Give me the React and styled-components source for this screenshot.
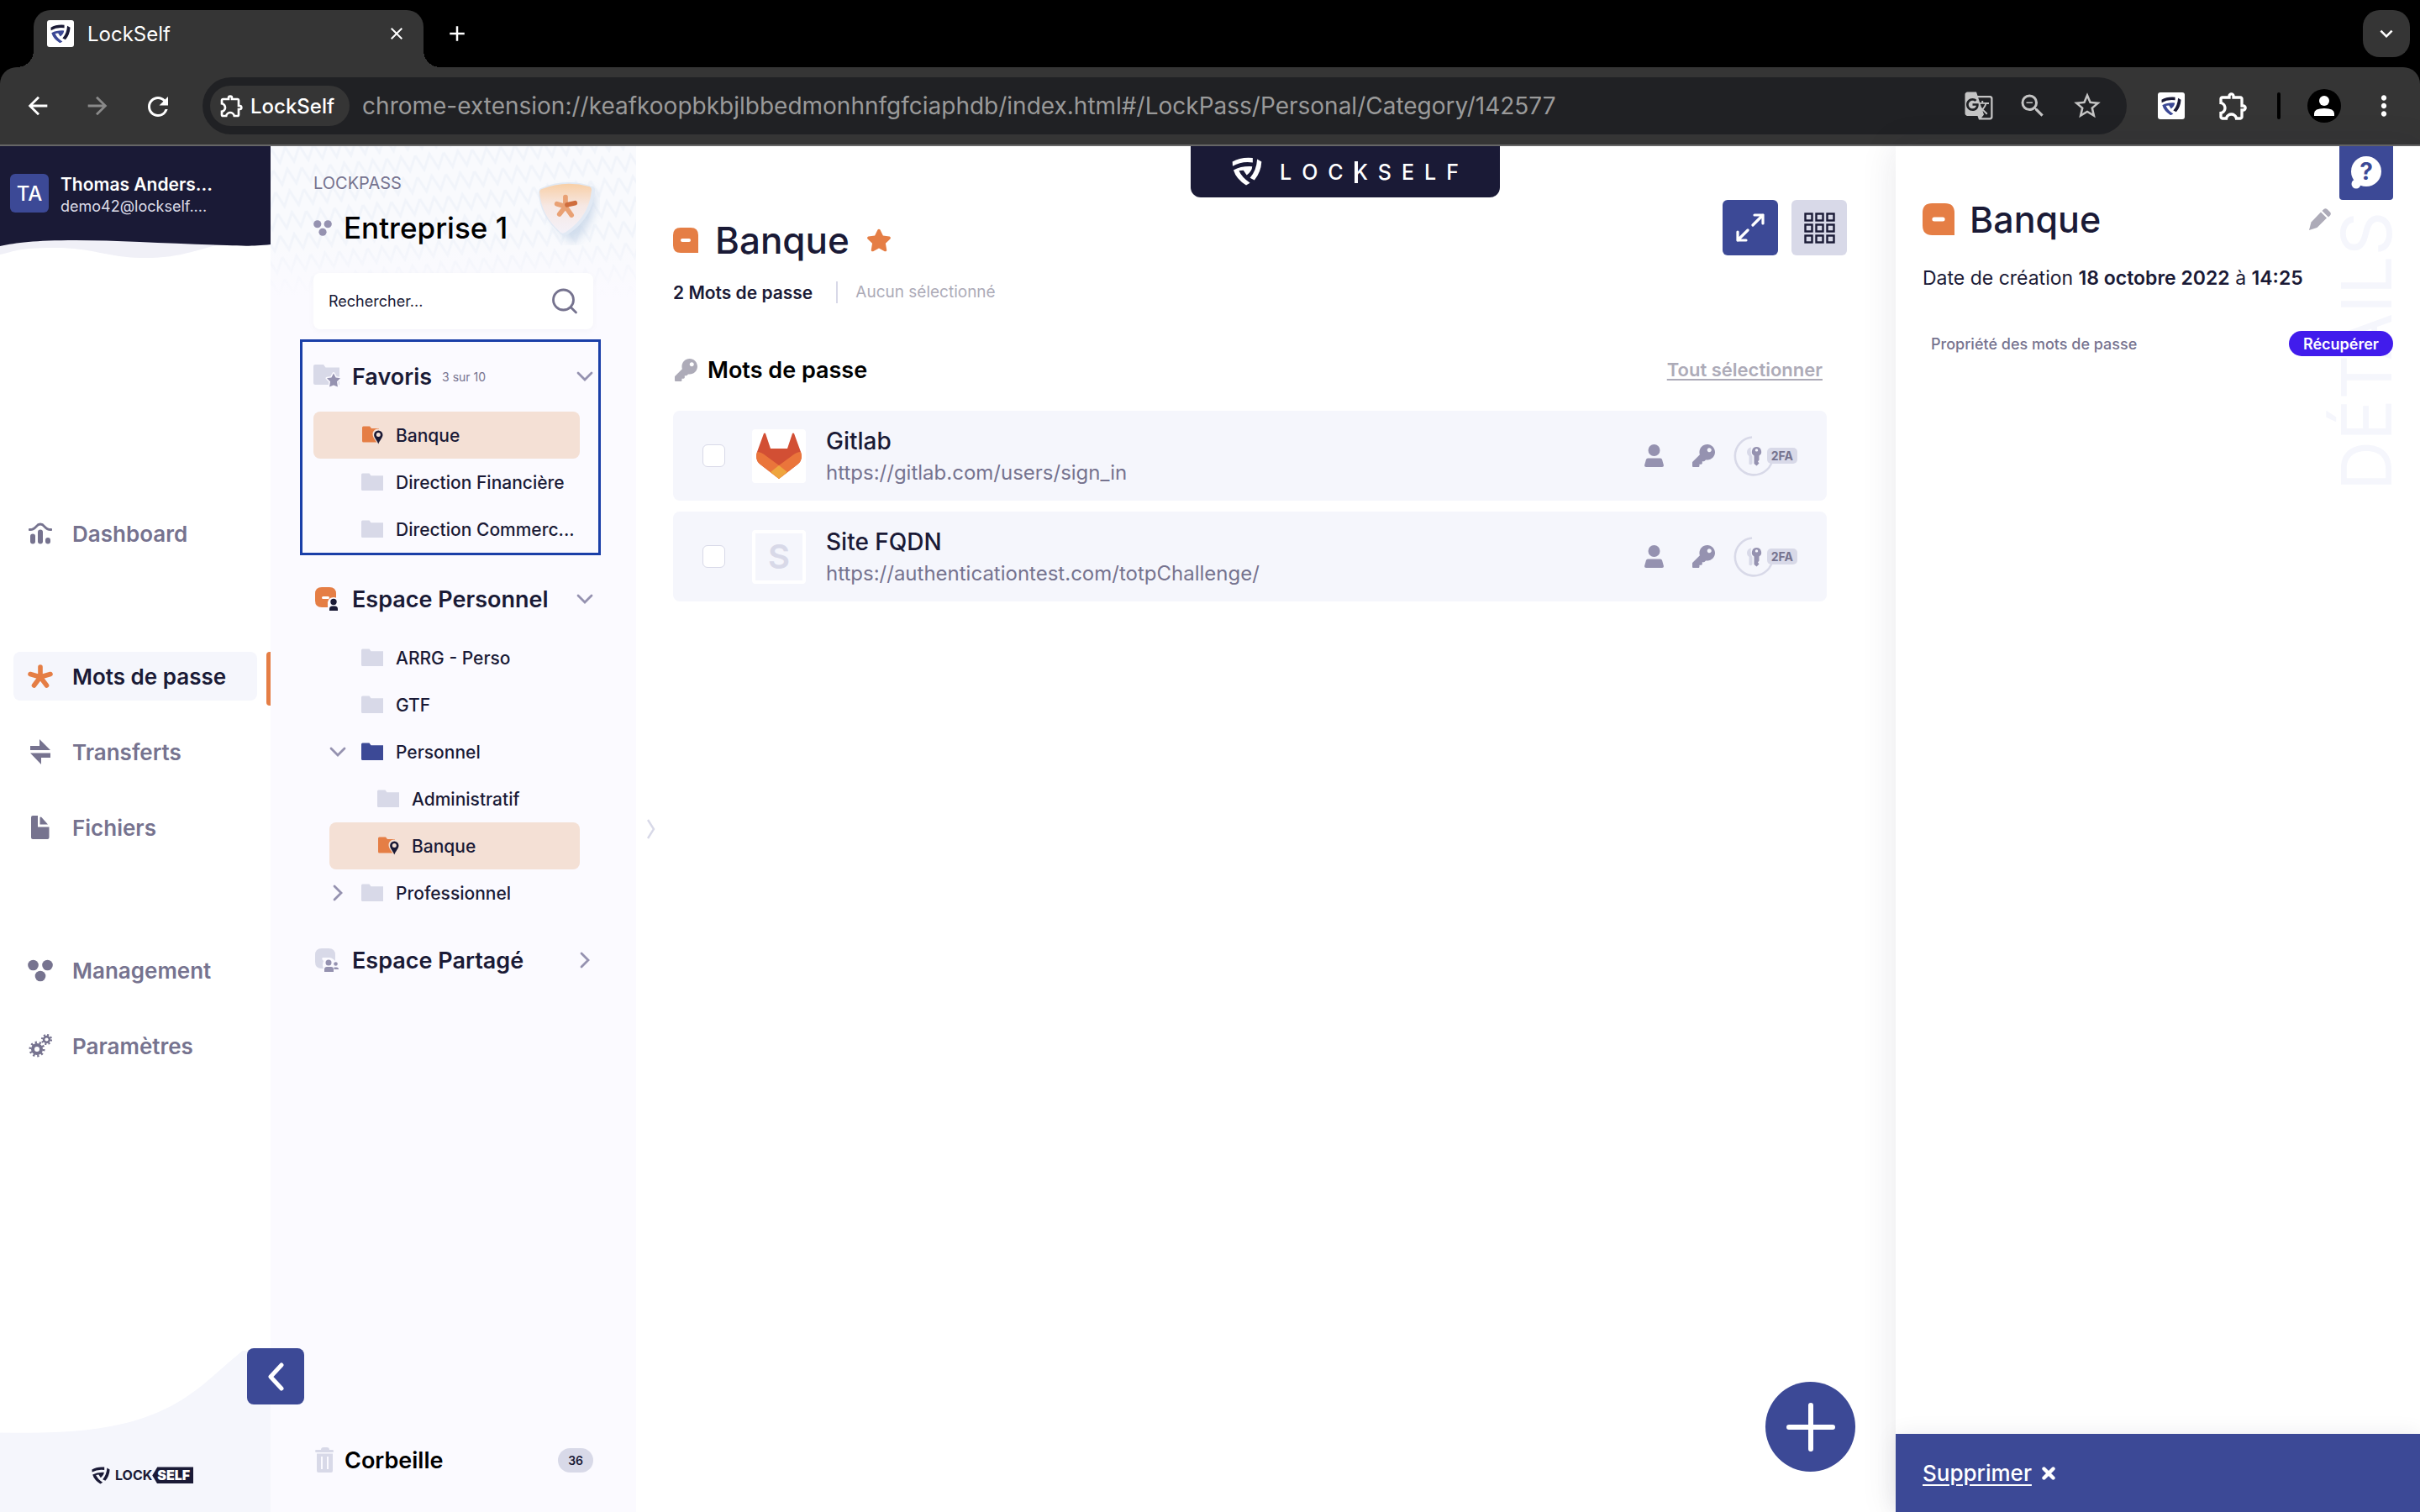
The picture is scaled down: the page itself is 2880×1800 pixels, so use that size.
import { useState } from "react"
import styled, { createGlobalStyle, css } from "styled-components"
import {
    MdArrowBack,
    MdArrowForward,
    MdRefresh,
    MdOutlineExtension,
    MdGTranslate,
    MdZoomOut,
    MdStarOutline,
    MdClose,
    MdAdd,
    MdMoreVert,
    MdKeyboardArrowDown,
} from "react-icons/md"
import { FaKey, FaStar } from "react-icons/fa"

const GlobalStyle = createGlobalStyle`
    * { box-sizing: border-box; }

    body {
        margin: 0;
        background: #fff;
        color: #1a1a36;
        font-family: Inter, "Liberation Sans", sans-serif;
    }

    button, input {
        font-family: inherit;
    }

    button {
        border: 0;
        padding: 0;
        background: none;
        color: inherit;
        cursor: pointer;
    }

    svg {
        display: block;
        flex: none;
    }

    h1, h2, h3, p, ul {
        margin: 0;
        padding: 0;
    }

    ul { list-style: none; }
`

const Page = styled.div`
    min-height: 100vh;
    display: flex;
    flex-direction: column;
`

/* ---------- browser ---------- */

const TabStrip = styled.div`
    height: 80px;
    padding: 12px 12px 0 40px;
    display: flex;
    align-items: flex-start;
    background: #000;
    color: #fff;
`

const Tab = styled.div`
    position: relative;
    width: 464px;
    height: 68px;
    padding: 0 20px 12px 16px;
    display: flex;
    align-items: center;
    gap: 16px;
    border-radius: 20px 20px 0 0;
    background: #353535;
    font-size: 24px;

    &::before, &::after {
        content: "";
        position: absolute;
        bottom: 0;
        width: 20px;
        height: 20px;
    }

    &::before {
        right: 100%;
        background: radial-gradient(circle at 0 0, #000 20px, #353535 20px);
    }

    &::after {
        left: 100%;
        background: radial-gradient(circle at 100% 0, #000 20px, #353535 20px);
    }
`

const TabTitle = styled.span`
    flex: 1;
`

const Favicon = styled.span`
    width: 32px;
    height: 32px;
    display: flex;
    align-items: center;
    justify-content: center;
    border-radius: 3px;
    background: #fff;
`

const NewTab = styled.button`
    width: 80px;
    height: 56px;
    display: flex;
    align-items: center;
    justify-content: center;
`

const TabSearch = styled.button`
    width: 56px;
    height: 56px;
    margin-left: auto;
    display: flex;
    align-items: center;
    justify-content: center;
    border-radius: 20px;
    background: #353535;
`

const ToolbarBack = styled.div`
    background: #000;
`

const Toolbar = styled.div`
    height: 94px;
    padding: 0 24px 0 28px;
    display: flex;
    align-items: center;
    border-bottom: 2px solid #666;
    border-radius: 20px 20px 0 0;
    background: #353535;
    color: #fff;
`

const NavButton = styled.button`
    width: 34px;
    height: 34px;
    margin-right: 37px;
    color: ${props => props.disabled ? "#8a8a8a" : "#fff"};
`

const Omnibox = styled.div`
    flex: 1;
    min-width: 0;
    height: 68px;
    padding: 0 28px 0 9px;
    display: flex;
    align-items: center;
    border-radius: 34px;
    background: #202124;
    color: #c4c4c4;
`

const ExtensionChip = styled.div`
    height: 48px;
    padding: 0 18px 0 10px;
    display: flex;
    align-items: center;
    gap: 6px;
    border-radius: 24px;
    background: #353535;
    color: #fff;
    font-size: 24px;
    font-weight: 500;
`

const Address = styled.input`
    flex: 1;
    min-width: 0;
    margin-left: 15px;
    padding: 0;
    border: 0;
    outline: 0;
    background: none;
    color: #9a9a9a;
    font-size: 28px;
`

const OmniIcons = styled.div`
    display: flex;
    align-items: center;
    gap: 28px;
`

const ToolIcons = styled.div`
    margin-left: 37px;
    display: flex;
    align-items: center;
    gap: 32px;

    > :first-child { margin-right: 6px; }
`

const Divider = styled.span`
    width: 4px;
    height: 32px;
    border-radius: 2px;
    background: #000;
`

const Profile = styled.button`
    width: 40px;
    height: 40px;
    border-radius: 50%;
    background: #000;
`

/* ---------- left menu ---------- */

const Shell = styled.div`
    flex: 1;
    display: grid;
    grid-template-columns: 322px minmax(0, 1fr);
`

const Menu = styled.aside`
    position: relative;
    display: flex;
    flex-direction: column;
    background: #fff;
`

const UserHeader = styled.header`
    height: 112px;
    padding: 0 12px;
    display: flex;
    align-items: center;
    gap: 14px;
    background: #1a1a36;
    color: #fff;
`

const Initials = styled.span`
    width: 46px;
    height: 46px;
    display: flex;
    align-items: center;
    justify-content: center;
    border-radius: 6px;
    background: #3c4996;
    font-size: 24px;
    font-weight: 500;
`

const UserInfo = styled.div`
    min-width: 0;
    padding-top: 6px;
`

const UserText = styled.div`
    font-size: ${props => props.$small ? 18 : 21}px;
    font-weight: ${props => props.$small ? 400 : 600};
    line-height: 26px;
    color: ${props => props.$small ? "#dcdce8" : "#fff"};
    white-space: nowrap;
`

const MenuNav = styled.nav`
    flex: 1;
    padding: 296px 16px 0;
`

const MenuGroup = styled.ul`
    margin-bottom: 112px;
    display: flex;
    flex-direction: column;
    gap: 32px;
`

const MenuLink = styled.a`
    position: relative;
    height: 58px;
    padding: 0 16px;
    display: flex;
    align-items: center;
    gap: 22px;
    border-radius: 8px;
    color: #76738f;
    font-size: 26px;
    font-weight: 600;
    text-decoration: none;

    ${props => props.$active && css`
        background: #f5f6fc;
        color: #1a1a36;

        &::after {
            content: "";
            position: absolute;
            top: 0;
            right: -16px;
            width: 5px;
            height: 64px;
            border-radius: 4px 0 0 4px;
            background: #e57e45;
        }
    `}
`

const MenuFooter = styled.footer`
    position: relative;
    height: 192px;
    padding: 138px 0 0 109px;

    > svg:first-child {
        position: absolute;
        inset: 0;
    }
`

const SmallBrand = styled.div`
    position: relative;
    display: flex;
    align-items: center;
    gap: 6px;
    font-size: 16px;
    font-weight: 700;
    line-height: 20px;

    span { display: flex; }

    b {
        padding: 0 4px 0 6px;
        background: #1a1a36;
        color: #fff;
        clip-path: polygon(6px 0, 100% 0, 100% 100%, 6px 100%, 0 50%);
    }
`

const CollapseButton = styled.button`
    position: absolute;
    right: -40px;
    bottom: 128px;
    z-index: 2;
    width: 68px;
    height: 67px;
    display: flex;
    align-items: center;
    justify-content: center;
    border-radius: 8px;
    background: #3c4996;
`

/* ---------- categories ---------- */

const Workspace = styled.div`
    position: relative;
    display: grid;
    grid-template-columns: 435px minmax(0, 1fr) 624px;
`

const Categories = styled.aside`
    position: relative;
    padding: 0 42px 20px 35px;
    display: flex;
    flex-direction: column;
    background: #fbfaff;
`

const Texture = styled.svg`
    position: absolute;
    top: 0;
    left: 0;
`

const SpaceHeader = styled.header`
    position: relative;
    height: 151px;
    padding: 30px 9px 0 16px;
    display: flex;
    justify-content: space-between;

    p {
        color: #76738f;
        font-size: 20px;
        line-height: 28px;
    }

    h2 {
        margin-top: 16px;
        display: flex;
        align-items: center;
        gap: 14px;
        color: #000;
        font-size: 35px;
        font-weight: 500;
        line-height: 46px;
        white-space: nowrap;
    }
`

const ShieldWrap = styled.span`
    margin: 10px -8px 0 0;
`

const SearchBox = styled.label`
    position: relative;
    height: 67px;
    margin: 0 9px 12px 16px;
    padding: 0 18px;
    display: flex;
    align-items: center;
    border-radius: 8px;
    background: #fff;
    box-shadow: 0 2px 8px rgba(26, 26, 54, .03);

    input {
        flex: 1;
        min-width: 0;
        padding: 0;
        border: 0;
        outline: 0;
        background: none;
        color: #1a1a36;
        font-size: 18px;
    }

    input::placeholder {
        color: #1a1a36;
        opacity: 1;
    }
`

const Section = styled.section`
    margin-top: 27px;
    padding: 0 9px 0 16px;

    ${props => props.$outlined && css`
        margin-top: 0;
        padding: 16px 6px 0 13px;
        border: 3px solid #1a3fa8;
    `}
`

const SectionTitle = styled.button`
    width: 100%;
    height: 50px;
    display: flex;
    align-items: center;
    gap: 14px;
    font-size: 27px;
    font-weight: 600;
    color: ${props => props.$black ? "#000" : "#1a1a36"};

    small {
        margin-left: -2px;
        color: #76738f;
        font-size: 14px;
        font-weight: 400;
    }

    > :last-child { margin-left: auto; }
`

const IconSlot = styled.span`
    width: 32px;
    display: flex;
    justify-content: center;
`

const ChevronSlot = styled.span`
    width: 20px;
    display: flex;
    justify-content: center;
`

const Tree = styled.ul`
    margin-top: 17px;
    padding-right: 16px;
`

const TreeRow = styled.li`
    height: 56px;
    margin-left: ${props => props.$level * 19}px;
    padding-left: 19px;
    display: flex;
    align-items: center;
    border-radius: 8px;
    background: ${props => props.$selected ? "#f4e0d5" : "none"};
    font-size: 21px;
    font-weight: 500;
    white-space: nowrap;

    > a {
        display: flex;
        align-items: center;
        gap: 15px;
        color: inherit;
        text-decoration: none;
    }
`

const TreeToggle = styled.button`
    width: 38px;
    height: 20px;
    display: flex;
    align-items: center;
`

const TrashRow = styled.div`
    margin-top: auto;
    height: 84px;
    padding: 0 9px 0 16px;
    display: flex;
    align-items: center;

    button { gap: 11px; }
`

const Count = styled.span`
    height: 29px;
    padding: 0 12px;
    border-radius: 15px;
    background: #d8d9e8;
    color: #1a1a36;
    font-size: 14px;
    font-weight: 600;
    line-height: 29px;
`

/* ---------- passwords ---------- */

const Main = styled.main`
    position: relative;
    padding: 64px 58px 48px 44px;
`

const BrandBanner = styled.div`
    position: absolute;
    top: 0;
    left: 50%;
    z-index: 3;
    width: 368px;
    height: 61px;
    padding: 0 49px;
    display: flex;
    align-items: center;
    justify-content: space-between;
    transform: translateX(-50%);
    border-radius: 0 0 12px 12px;
    background: #1a1a36;
    color: #fff;
`

const BrandName = styled.div`
    width: 213px;
    display: flex;
    justify-content: space-between;
    font-size: 25px;
    font-weight: 500;

    /* the K carries a taller stem than the other letters */
    .stem {
        position: relative;
    }

    .stem::before {
        content: "";
        position: absolute;
        top: 2px;
        left: 1px;
        width: 4px;
        height: 26px;
        background: #fff;
    }
`

const PanelHandle = styled.button`
    position: absolute;
    top: 50%;
    left: 13px;
    transform: translateY(-50%);
`

const MainHeader = styled.header`
    height: 66px;
    display: flex;
    align-items: flex-end;
    gap: 16px;

    h1 {
        height: 36px;
        margin-right: auto;
        display: flex;
        align-items: center;
        gap: 20px;
        font-size: 44px;
        font-weight: 500;
        line-height: 36px;
    }
`

const SquareButton = styled.button`
    width: 66px;
    height: 66px;
    display: flex;
    align-items: center;
    justify-content: center;
    border-radius: 6px;
    background: ${props => props.$light ? "#d8d9e8" : "#3c4996"};
`

const Summary = styled.div`
    height: 26px;
    margin-top: 31px;
    display: flex;
    align-items: center;
    font-size: 21px;
    font-weight: 600;

    span {
        margin-left: 28px;
        padding-left: 21px;
        border-left: 2px solid #d8d9e8;
        color: #adabb8;
        font-size: 19px;
        font-weight: 400;
        line-height: 26px;
    }
`

const ListHeader = styled.div`
    height: 34px;
    margin: 62px 29px 32px 2px;
    display: flex;
    align-items: center;
    justify-content: space-between;

    h3 {
        display: flex;
        align-items: center;
        gap: 12px;
        color: #000;
        font-size: 27px;
        font-weight: 600;
    }

    svg { color: #adabb8; }
`

const SelectAll = styled.button`
    color: #adabb8;
    font-size: 22px;
    font-weight: 600;
    text-decoration: underline;
    text-underline-offset: 3px;
`

const PasswordList = styled.ul`
    margin-right: 24px;
    display: flex;
    flex-direction: column;
    gap: 13px;
`

const PasswordRow = styled.li`
    height: 107px;
    padding: 0 35px;
    display: flex;
    align-items: center;
    border-radius: 8px;
    background: #f5f6fc;
`

const Check = styled.input`
    appearance: none;
    width: 27px;
    height: 27px;
    margin: 0 32px 0 0;
    border: 1px solid #d8d9e8;
    border-radius: 6px;
    background: #fff;
`

const SiteLogo = styled.span`
    width: 64px;
    height: 64px;
    margin-right: 24px;
    display: flex;
    align-items: center;
    justify-content: center;
    border: 4px solid #fff;
    border-radius: 4px;
    background: ${props => props.$filled ? "#fff" : "#f5f6fc"};
    color: #d8d9e8;
    font-size: 40px;
    font-weight: 600;
`

const SiteText = styled.div`
    flex: 1;
    min-width: 0;

    h3 {
        font-size: 28px;
        font-weight: 500;
        line-height: 40px;
    }

    p {
        color: #76738f;
        font-size: 24px;
        line-height: 36px;
    }
`

const RowActions = styled.div`
    display: flex;
    align-items: center;
    color: #9592b0;

    button { margin-right: 34px; }
    button + button { margin-right: 22px; }
`

const TwoFactor = styled.span`
    height: 19px;
    margin-left: -8px;
    padding: 0 5px;
    z-index: 1;
    border-radius: 5px;
    background: #d8d9e8;
    color: #76738f;
    font-size: 14px;
    font-weight: 700;
    line-height: 19px;
`

const AddButton = styled.button`
    position: absolute;
    right: 48px;
    bottom: 48px;
    width: 107px;
    height: 107px;
    display: flex;
    align-items: center;
    justify-content: center;
    border-radius: 50%;
    background: #3c4996;
`

/* ---------- details ---------- */

const Details = styled.aside`
    position: relative;
    display: flex;
    flex-direction: column;
    background: #fff;
    box-shadow: 0 0 40px rgba(26, 26, 54, .1);
`

const DetailsBody = styled.div`
    flex: 1;
    padding: 62px 32px 0;

    > * { position: relative; }
`

const DetailsTitle = styled.div`
    height: 50px;
    margin-right: 74px;
    display: flex;
    align-items: center;

    h2 {
        flex: 1;
        margin-left: 18px;
        font-size: 43px;
        font-weight: 500;
        line-height: 50px;
    }
`

const Created = styled.p`
    margin-top: 30px;
    font-size: 23px;
    line-height: 30px;

    b { font-weight: 600; }
`

const Ownership = styled.div`
    height: 30px;
    margin-top: 48px;
    padding-left: 10px;
    display: flex;
    align-items: center;
    justify-content: space-between;
    color: #76738f;
    font-size: 18px;
    font-weight: 500;
`

const RecoverButton = styled.button`
    height: 30px;
    padding: 0 17px;
    border-radius: 15px;
    background: #411cec;
    color: #fff;
    font-size: 18px;
    font-weight: 600;
`

const Watermark = styled.span`
    && { position: absolute; }
    top: 78px;
    right: 23px;
    color: #f5f6fc;
    font-size: 82px;
    line-height: 80px;
    writing-mode: vertical-rl;
    transform: rotate(180deg);
`

const HelpButton = styled.button`
    position: absolute;
    top: 0;
    right: 32px;
    z-index: 1;
    width: 64px;
    height: 64px;
    display: flex;
    align-items: center;
    justify-content: center;
    border-radius: 0 0 4px 4px;
    background: #3c4996;
`

const DetailsFooter = styled.footer`
    height: 93px;
    padding: 0 32px;
    display: flex;
    align-items: center;
    background: #3c4996;
    color: #fff;
    box-shadow: 0 0 24px rgba(26, 26, 54, .08);
`

const DeleteButton = styled.button`
    display: flex;
    align-items: center;
    gap: 12px;
    font-size: 26px;
    font-weight: 500;

    span {
        text-decoration: underline;
        text-underline-offset: 4px;
    }
`

/* ---------- drawings ---------- */

function Emblem({ width, color, inner }) {
    return (
        <svg width={width} height={width * 104 / 110} viewBox="0 0 110 104" fill={color}>
            <path d="M2 17Q32-1 76 3v17Q36 14 3 33z" />
            <path d="M92 8l16 9q-2 38-26 67l-16-8q24-28 26-68z" />
            <path d="M6 47q28-15 68-13 0 16-20 32L42 48l-16 2q10 24 40 44l-14 8Q16 80 6 47z" fill={inner || color} />
        </svg>
    )
}

function Chevron({ dir = "down", color = "#9592b0" }) {
    return dir === "down" ? (
        <svg width="20" height="12" viewBox="0 0 20 12" fill="none" stroke={color} strokeWidth="2.8" strokeLinecap="round">
            <path d="M2 2l8 8 8-8" />
        </svg>
    ) : (
        <svg width="12" height="20" viewBox="0 0 12 20" fill="none" stroke={color} strokeWidth="2.8" strokeLinecap="round">
            <path d="M2 2l8 8-8 8" />
        </svg>
    )
}

function Folder({ type }) {
    if (type === "current") return (
        <svg width="26" height="22" viewBox="0 0 26 22">
            <path d="M1 2q0-1.500 1.500-1.500h7.500l2 2.500h9v16.500H2.500Q1 19.500 1 18z" fill="#e57e45" />
            <path d="M20 3.500c-4 0-6.500 3-6.500 6.500 0 4 4 8 6.500 12h6V4z" fill="#f4e0d5" />
            <path d="M20.300 5.500a5.200 5.200 0 0 0-5.200 5.200c0 3.500 3.700 6.500 5.200 10.800 1.500-4.300 5.200-7.300 5.200-10.800a5.200 5.200 0 0 0-5.200-5.200zm0 2.600a2.500 2.500 0 1 1 0 5 2.500 2.500 0 0 1 0-5z" fill="#1a1a36" fillRule="evenodd" />
        </svg>
    )
    return (
        <svg width="26" height="22" viewBox="0 0 26 22" fill={type === "open" ? "#3c4996" : "#d8d9e8"}>
            <path d="M0 2Q0 .5 1.500 .5H9.500L11.500 3.300H26V21H1.500Q0 21 0 19.500z" />
        </svg>
    )
}

function FavoriteFolder() {
    return (
        <svg width="32" height="28" viewBox="0 0 32 28">
            <path d="M0 2q0-2 2-2h10l2.500 3.500H31V24H2q-2 0-2-2z" fill="#d8d9e8" />
            <path d="M24 10.500l2.600 5 5.400.8-4 3.900.9 6.300-4.900-2-4.900 2 .9-6.300-4-3.900 5.400-.8z" fill="#9592b0" stroke="#fbfaff" strokeWidth="3" strokeLinejoin="round" paintOrder="stroke" />
        </svg>
    )
}

function PersonalSpace() {
    return (
        <svg width="28" height="28" viewBox="0 0 28 28">
            <path d="M8 0h9q8 0 8 8v8q0 8-8 8H8q-8 0-8-8V8q0-8 8-8z" fill="#e57e45" />
            <rect x="8" y="11" width="9" height="3" rx="1.500" fill="#fff" />
            <path d="M15 27v-5q-1-10 7-10 6 0 6 9v7z" fill="#fbfaff" />
            <circle cx="22" cy="17.500" r="3.700" fill="#1a1a36" />
            <path d="M17 28v-2q0-3.500 3.500-3.500h3q3.500 0 3.500 3.500v2z" fill="#1a1a36" />
        </svg>
    )
}

function SharedSpace() {
    return (
        <svg width="28" height="28" viewBox="0 0 28 28">
            <path d="M8 0h8q8 0 8 8v7q-4-4-7-4H9q-2 1 1 4-2 5 0 9H8q-8 0-8-8V8q0-8 8-8z" fill="#d8d9e8" />
            <g fill="#9592b0">
                <circle cx="16" cy="17" r="3.500" />
                <path d="M11 28v-3q0-3 3-3h5q3 0 3 3v3z" />
                <circle cx="24.500" cy="18.500" r="2.300" />
                <path d="M22.500 25v-2.500h3q2.500 0 2.500 2.500z" />
            </g>
        </svg>
    )
}

function CategoryTile({ size }) {
    return (
        <svg width={size} height={size} viewBox="0 0 30 30">
            <path d="M9 0h12q9 0 9 9v21H9q-9 0-9-9V9q0-9 9-9z" fill="#e57e45" />
            <rect x="9" y="13" width="12" height="4" rx="2" fill="#fff" />
        </svg>
    )
}

function Dots({ width, height, color }) {
    return (
        <svg width={width} height={height} viewBox="0 0 30 26" fill={color}>
            <circle cx="6.500" cy="6.500" r="6.300" />
            <circle cx="23.500" cy="6.500" r="6.300" />
            <circle cx="15" cy="19.500" r="6.300" />
        </svg>
    )
}

function Asterisk({ size = 30, color = "#e57e45" }) {
    return (
        <svg width={size} height={size} viewBox="0 0 30 30" stroke={color} strokeWidth="5.600" strokeLinecap="round">
            <path d="M15 16V4M15 16L3 12.500M15 16l12-3.500M15 16L7.500 26M15 16l7.500 10" />
        </svg>
    )
}

function Gears() {
    return (
        <svg width="28" height="28" viewBox="0 0 28 28" fill="none" stroke="#76738f">
            <circle cx="10" cy="18" r="5" strokeWidth="4" />
            <circle cx="10" cy="18" r="8" strokeWidth="3" strokeDasharray="2.200 2.820" />
            <circle cx="21.500" cy="6.500" r="3.400" strokeWidth="2.600" />
            <circle cx="21.500" cy="6.500" r="5.400" strokeWidth="2.400" strokeDasharray="2 2.240" />
        </svg>
    )
}

function Pencil() {
    return (
        <svg width="26" height="26" viewBox="0 0 26 26" fill="#adabb8">
            <path d="M0 26l2.500-9.500L14 4.500l7 7L9.500 23z" />
            <path d="M15.500 3L17.500 1q2-1.700 4 0l3.500 3.500q1.700 2 0 4l-2 2z" />
        </svg>
    )
}

function Shield() {
    return (
        <svg width="78" height="78" viewBox="0 0 76 76">
            <defs>
                <linearGradient id="shield" x1="0" y1="0" x2="0" y2="1">
                    <stop offset="0" stopColor="#f8cfa6" />
                    <stop offset=".45" stopColor="#f6e8e4" />
                    <stop offset="1" stopColor="#f4f1f8" />
                </linearGradient>
                <filter id="soft" x="-40%" y="-40%" width="180%" height="180%">
                    <feGaussianBlur stdDeviation="5" />
                </filter>
            </defs>
            <path d="M12 18Q40 2 72 16 70 54 44 74 18 52 12 18z" fill="#c6d5e8" opacity=".8" filter="url(#soft)" />
            <path d="M7 10Q36-3 68 8q3 1 2 7Q66 46 38 64q-3 2-6 0Q5 42 5 14q0-3 2-4z" fill="#e1e9f4" />
            <path d="M8 11Q35 0 64 8q3 1 2 6Q63 43 36 61q-3 2-6 0Q7 40 6 14q0-2 2-3z" fill="url(#shield)" />
            <g stroke="#e9a174" strokeWidth="5.600" strokeLinecap="round">
                <path d="M36 31V20M36 31l-10-3M36 31l-7 9M36 31l7 10" />
                <path d="M38 29l9-2" stroke="#cf6d3d" />
            </g>
        </svg>
    )
}

function Person() {
    return (
        <svg width="23" height="27" viewBox="0 0 23 27" fill="currentColor">
            <circle cx="11.500" cy="7" r="7" />
            <path d="M0 25l2-7q.5-1.500 2-1.500h15q1.500 0 2 1.500l2 7q0 2-2 2H2q-2 0-2-2z" />
        </svg>
    )
}

function OtpRing() {
    return (
        <svg width="48" height="48" viewBox="0 0 48 48">
            <path d="M22 1.500A22.500 22.500 0 1 0 46 30" fill="none" stroke="#d8d9e8" strokeWidth="2.600" />
            <path d="M21 13.500q-5 1-5 6 0 3 2.500 4.500v9.500q3 2 4-1v-8q-3-5-1.500-11z" fill="#d8d9e8" />
            <path d="M27.500 13a5.700 5.700 0 0 0-3 10.500V33l3 2.500 3-3-1.500-2 1.500-2V23.500A5.700 5.700 0 0 0 27.500 13zm0 2.200a1.700 1.700 0 1 1 0 3.400 1.700 1.700 0 0 1 0-3.400z" fill="#9592b0" fillRule="evenodd" />
        </svg>
    )
}

function Fox() {
    return (
        <svg width="56" height="56" viewBox="0 0 56 56">
            <path d="M10 1L2 23Q-1 33 6 38l22 17 22-17q7-5 4-15L46 1q-1-1-2 0l-6 18H18L12 1q-1-1-2 0z" fill="#d24f34" />
            <path d="M2 23q5 0 11 5l15 11 15-11q6-5 11-5 3 10-4 15L28 55 6 38Q-1 33 2 23z" fill="#ea753b" />
            <path d="M18 47l10-8 10 8-10 8z" fill="#eea53f" />
        </svg>
    )
}

const menuIcons = {
    dashboard: (
        <svg width="28" height="26" viewBox="0 0 28 26" fill="#76738f">
            <path d="M1 8.500C10 9 8 2 14 2s4 7 13 6.500" fill="none" stroke="#76738f" strokeWidth="2.800" strokeLinecap="round" />
            <rect x="2" y="13.500" width="6" height="12" rx="3" />
            <rect x="11" y="8.500" width="6" height="17" rx="3" />
            <rect x="20" y="18" width="6" height="7.500" rx="3" />
        </svg>
    ),
    passwords: <Asterisk />,
    transfers: (
        <svg width="26" height="30" viewBox="0 0 26 30" fill="#76738f">
            <path d="M1 8h11V0l13 13H1zM25 22H14v8L1 16.500h24z" />
        </svg>
    ),
    files: (
        <svg width="22" height="28" viewBox="0 0 22 28" fill="#76738f">
            <path d="M2 0h6v13.500h13.500V26q0 2-2 2H2q-2 0-2-2V2q0-2 2-2z" />
            <path d="M10.500 2q1-1 2 0l7.500 8.500h-9.500z" />
        </svg>
    ),
    management: <Dots width={30} height={27} color="#76738f" />,
    settings: <Gears />,
}

const menuGroups = [
    [{ icon: "dashboard", label: "Dashboard" }],
    [
        { icon: "passwords", label: "Mots de passe", active: true },
        { icon: "transfers", label: "Transferts" },
        { icon: "files", label: "Fichiers" },
    ],
    [
        { icon: "management", label: "Management" },
        { icon: "settings", label: "Paramètres" },
    ],
]

const favorites = [
    { name: "Banque", type: "current" },
    { name: "Direction Financière" },
    { name: "Direction Commerc..." },
]

const personal = [
    { name: "ARRG - Perso" },
    { name: "GTF" },
    { name: "Personnel", type: "open", toggle: "down" },
    { name: "Administratif", level: 1 },
    { name: "Banque", type: "current", level: 1 },
    { name: "Professionnel", toggle: "right" },
]

const passwords = [
    { name: "Gitlab", url: "https://gitlab.com/users/sign_in", logo: <Fox /> },
    { name: "Site FQDN", url: "https://authenticationtest.com/totpChallenge/" },
]

function Browser() {
    return (
        <>
            <TabStrip>
                <Tab>
                    <Favicon><Emblem width={24} color="#1a1a36" inner="#3c4996" /></Favicon>
                    <TabTitle>LockSelf</TabTitle>
                    <button aria-label="Fermer l'onglet"><MdClose size="24" /></button>
                </Tab>
                <NewTab aria-label="Nouvel onglet"><MdAdd size="30" /></NewTab>
                <TabSearch aria-label="Rechercher un onglet"><MdKeyboardArrowDown size="30" /></TabSearch>
            </TabStrip>
            <ToolbarBack>
                <Toolbar>
                    <NavButton aria-label="Retour"><MdArrowBack size="34" /></NavButton>
                    <NavButton aria-label="Avancer" disabled><MdArrowForward size="34" /></NavButton>
                    <NavButton aria-label="Actualiser"><MdRefresh size="36" /></NavButton>
                    <Omnibox>
                        <ExtensionChip>
                            <MdOutlineExtension size="32" />
                            LockSelf
                        </ExtensionChip>
                        <Address
                            aria-label="Adresse"
                            defaultValue="chrome-extension://keafkoopbkbjlbbedmonhnfgfciaphdb/index.html#/LockPass/Personal/Category/142577"
                        />
                        <OmniIcons>
                            <MdGTranslate size="36" />
                            <MdZoomOut size="36" />
                            <MdStarOutline size="38" />
                        </OmniIcons>
                    </Omnibox>
                    <ToolIcons>
                        <Favicon><Emblem width={24} color="#1a1a36" inner="#3c4996" /></Favicon>
                        <MdOutlineExtension size="40" />
                        <Divider />
                        <Profile aria-label="Profil">
                            <svg width="40" height="40" viewBox="0 0 40 40" fill="#fff">
                                <circle cx="20" cy="14" r="6" />
                                <path d="M8 32v-3q0-6 12-6t12 6v3z" />
                            </svg>
                        </Profile>
                        <MdMoreVert size="38" />
                    </ToolIcons>
                </Toolbar>
            </ToolbarBack>
        </>
    )
}

function SideMenu() {
    return (
        <Menu>
            <UserHeader>
                <Initials>TA</Initials>
                <UserInfo>
                    <UserText>Thomas Anders...</UserText>
                    <UserText $small>demo42@lockself....</UserText>
                </UserInfo>
            </UserHeader>
            <svg width="322" height="24" viewBox="0 0 322 24">
                <path d="M0 0h322v6H257c-30 8-50 16-90 15S110 9 65 9 20 13 0 17z" fill="#f0f0f7" />
                <path d="M0 0h322v5c-20 2-30 2-52 1C200 4 140 0 90 0 40 0 20 3 0 7z" fill="#1a1a36" />
            </svg>
            <MenuNav>
                {menuGroups.map((group, i) => (
                    <MenuGroup key={i}>
                        {group.map(item => (
                            <li key={item.label}>
                                <MenuLink href="#" $active={item.active}>
                                    <IconSlot>{menuIcons[item.icon]}</IconSlot>
                                    {item.label}
                                </MenuLink>
                            </li>
                        ))}
                    </MenuGroup>
                ))}
            </MenuNav>
            <MenuFooter>
                <svg width="322" height="192" viewBox="0 0 322 192">
                    <path d="M0 97.500c130 3 190-14 245-60 30-26 48-42 77-64V192H0z" fill="#f5f6fc" />
                </svg>
                <SmallBrand>
                    <Emblem width={22} color="#1a1a36" />
                    <span>LOCK<b>SELF</b></span>
                </SmallBrand>
            </MenuFooter>
            <CollapseButton aria-label="Réduire le menu">
                <svg width="20" height="34" viewBox="0 0 20 34" fill="none" stroke="#fff" strokeWidth="5" strokeLinecap="round" strokeLinejoin="round">
                    <path d="M17 3L4 17l13 14" />
                </svg>
            </CollapseButton>
        </Menu>
    )
}

function CategoryTree({ items }) {
    return (
        <Tree>
            {items.map(item => (
                <TreeRow key={item.name} $level={item.level || 0} $selected={item.type === "current"}>
                    <TreeToggle as={item.toggle ? "button" : "span"}>
                        {item.toggle && <ChevronSlot><Chevron dir={item.toggle} /></ChevronSlot>}
                    </TreeToggle>
                    <a href="#">
                        <Folder type={item.type} />
                        {item.name}
                    </a>
                </TreeRow>
            ))}
        </Tree>
    )
}

function CategoryPanel() {
    return (
        <Categories>
            <Texture width="435" height="180" viewBox="0 0 435 180">
                <defs>
                    <pattern id="knit" width="34" height="26" patternUnits="userSpaceOnUse" patternTransform="rotate(-6)">
                        <path d="M0 3l9 18L17 3l9 18 8-18" fill="none" stroke="#e4ebf5" strokeWidth="3" />
                    </pattern>
                    <linearGradient id="fade" x1="0" y1="0" x2="0" y2="1">
                        <stop offset=".6" stopColor="#fbfaff" stopOpacity="0" />
                        <stop offset="1" stopColor="#fbfaff" />
                    </linearGradient>
                </defs>
                <rect width="435" height="180" fill="#f9fafd" />
                <rect width="435" height="180" fill="url(#knit)" opacity=".4" />
                <rect width="435" height="180" fill="url(#fade)" />
            </Texture>
            <SpaceHeader>
                <div>
                    <p>LOCKPASS</p>
                    <h2>
                        <Dots width={22} height={19} color="#9592b0" />
                        Entreprise 1
                    </h2>
                </div>
                <ShieldWrap><Shield /></ShieldWrap>
            </SpaceHeader>
            <SearchBox>
                <input aria-label="Rechercher" placeholder="Rechercher..." />
                <svg width="32" height="32" viewBox="0 0 32 32" fill="none" stroke="#76738f" strokeWidth="2.800" strokeLinecap="round">
                    <circle cx="14.500" cy="14" r="12" />
                    <path d="M23.500 23l6 6" />
                </svg>
            </SearchBox>

            <Section $outlined>
                <SectionTitle>
                    <IconSlot><FavoriteFolder /></IconSlot>
                    Favoris
                    <small>3 sur 10</small>
                    <ChevronSlot><Chevron /></ChevronSlot>
                </SectionTitle>
                <CategoryTree items={favorites} />
            </Section>
            <Section>
                <SectionTitle>
                    <IconSlot><PersonalSpace /></IconSlot>
                    Espace Personnel
                    <ChevronSlot><Chevron /></ChevronSlot>
                </SectionTitle>
                <CategoryTree items={personal} />
            </Section>
            <Section>
                <SectionTitle>
                    <IconSlot><SharedSpace /></IconSlot>
                    Espace Partagé
                    <ChevronSlot><Chevron dir="right" /></ChevronSlot>
                </SectionTitle>
            </Section>

            <TrashRow>
                <SectionTitle $black>
                    <svg width="26" height="30" viewBox="0 0 26 30" fill="#d8d9e8">
                        <path d="M3 3h6q0-3 3-3h4q3 0 3 3h4q1 0 1 1.500T23 6H4Q2 6 2 4.500T3 3z" />
                        <path d="M4 7.500h19V28q0 2-2 2H6q-2 0-2-2zM9 11v15h2V11zm7 0v15h2V11z" fillRule="evenodd" />
                    </svg>
                    Corbeille
                    <Count>36</Count>
                </SectionTitle>
            </TrashRow>
        </Categories>
    )
}

function PasswordPanel() {
    const [checked, setChecked] = useState([])

    function toggle(name) {
        setChecked(checked.includes(name) ? checked.filter(n => n !== name) : [...checked, name])
    }

    return (
        <Main>
            <PanelHandle aria-label="Redimensionner">
                <svg width="10" height="24" viewBox="0 0 10 24" fill="none" stroke="#d8d9e8" strokeWidth="2.400">
                    <path d="M1 1l7 11-7 11" />
                </svg>
            </PanelHandle>
            <MainHeader>
                <h1>
                    <CategoryTile size={30} />
                    Banque
                    <FaStar size="30" color="#e57e45" />
                </h1>
                <SquareButton aria-label="Agrandir">
                    <svg width="34" height="34" viewBox="0 0 34 34" fill="none" stroke="#fff" strokeWidth="3.200" strokeLinecap="round" strokeLinejoin="round">
                        <path d="M20 14L32 2M22 2h10v10M14 20L2 32M2 22v10h10" />
                    </svg>
                </SquareButton>
                <SquareButton $light aria-label="Affichage en grille">
                    <svg width="37" height="37" viewBox="0 0 37 37" fill="none" stroke="#1a1a36" strokeWidth="2.400">
                        {[0, 13, 26].map(y => [0, 13, 26].map(x => (
                            <rect key={x + "-" + y} x={x + 1.5} y={y + 1.5} width="8" height="8" />
                        )))}
                    </svg>
                </SquareButton>
            </MainHeader>
            <Summary>
                2 Mots de passe
                <span>Aucun sélectionné</span>
            </Summary>
            <ListHeader>
                <h3><FaKey size="27" />Mots de passe</h3>
                <SelectAll onClick={() => setChecked(passwords.map(p => p.name))}>Tout sélectionner</SelectAll>
            </ListHeader>
            <PasswordList>
                {passwords.map(item => (
                    <PasswordRow key={item.name}>
                        <Check
                            type="checkbox"
                            aria-label={item.name}
                            checked={checked.includes(item.name)}
                            onChange={() => toggle(item.name)}
                        />
                        <SiteLogo $filled={!!item.logo}>{item.logo || "S"}</SiteLogo>
                        <SiteText>
                            <h3>{item.name}</h3>
                            <p>{item.url}</p>
                        </SiteText>
                        <RowActions>
                            <button aria-label="Copier l'identifiant"><Person /></button>
                            <button aria-label="Copier le mot de passe"><FaKey size="27" /></button>
                            <OtpRing />
                            <TwoFactor>2FA</TwoFactor>
                        </RowActions>
                    </PasswordRow>
                ))}
            </PasswordList>
            <AddButton aria-label="Ajouter">
                <svg width="58" height="58" viewBox="0 0 58 58" stroke="#fff" strokeWidth="6" strokeLinecap="round">
                    <path d="M29 3v52M3 29h52" />
                </svg>
            </AddButton>
        </Main>
    )
}

function DetailsPanel() {
    return (
        <Details>
            <HelpButton aria-label="Aide">
                <svg width="36" height="40" viewBox="0 0 36 40" fill="#fff">
                    <circle cx="18" cy="18" r="18" />
                    <circle cx="6" cy="33" r="5.500" />
                    <text x="18" y="28" fill="#3c4996" fontSize="28" fontWeight="700" textAnchor="middle">?</text>
                </svg>
            </HelpButton>
            <DetailsBody>
                <Watermark>DÉTAILS</Watermark>
                <DetailsTitle>
                    <CategoryTile size={38} />
                    <h2>Banque</h2>
                    <button aria-label="Modifier"><Pencil /></button>
                </DetailsTitle>
                <Created>Date de création <b>18 octobre 2022</b> à <b>14:25</b></Created>
                <Ownership>
                    Propriété des mots de passe
                    <RecoverButton>Récupérer</RecoverButton>
                </Ownership>
            </DetailsBody>
            <DetailsFooter>
                <DeleteButton>
                    <span>Supprimer</span>
                    <svg width="16" height="16" viewBox="0 0 16 16" stroke="#fff" strokeWidth="4.400" strokeLinecap="round">
                        <path d="M2.500 2.500l11 11M13.500 2.500l-11 11" />
                    </svg>
                </DeleteButton>
            </DetailsFooter>
        </Details>
    )
}

function App() {
    return (
        <Page>
            <GlobalStyle />
            <Browser />
            <Shell>
                <SideMenu />
                <Workspace>
                    <CategoryPanel />
                    <PasswordPanel />
                    <DetailsPanel />
                    <BrandBanner>
                        <Emblem width={36} color="#fff" />
                        <BrandName>
                            {"LOCKSELF".split("").map((letter, i) => (
                                <span key={i} className={letter === "K" ? "stem" : undefined}>{letter}</span>
                            ))}
                        </BrandName>
                    </BrandBanner>
                </Workspace>
            </Shell>
        </Page>
    )
}

export default App
